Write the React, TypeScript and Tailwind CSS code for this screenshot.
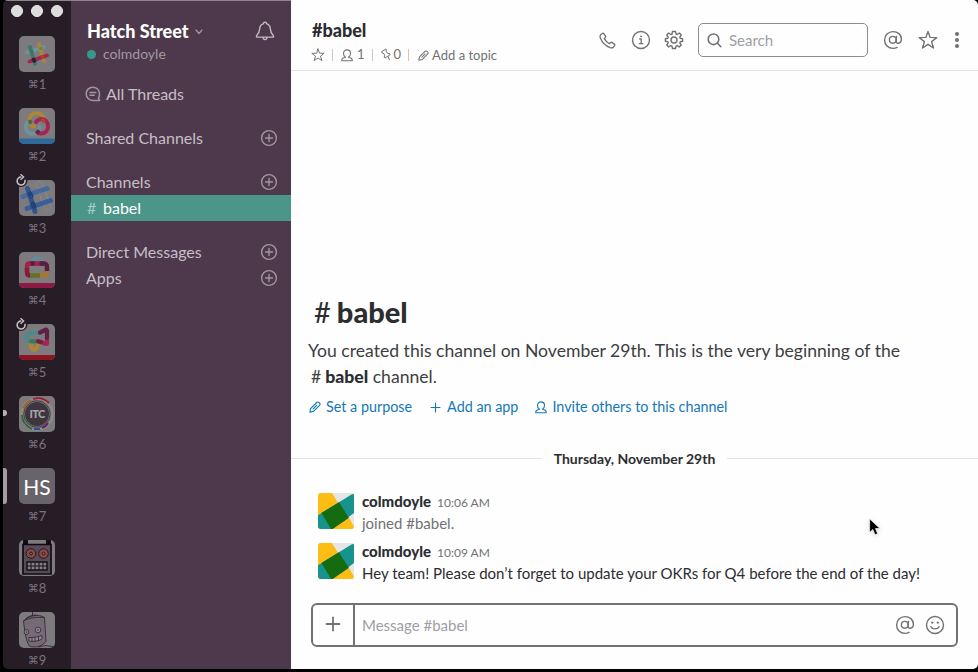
import React from "react";

type IconProps = { className?: string };

const stroke = {
  fill: "none",
  stroke: "currentColor",
  strokeLinecap: "round" as const,
  strokeLinejoin: "round" as const,
};

function Star({ className }: IconProps) {
  return (
    <svg viewBox="0 0 20 20" className={className} {...stroke} strokeWidth={1.4}>
      <path d="M10 1.4 12.2 7.4 18.8 7.6 13.6 11.6 15.5 18 10 14.3 4.5 18 6.4 11.6 1.2 7.6 7.8 7.4Z" />
    </svg>
  );
}

function Person({ className }: IconProps) {
  return (
    <svg viewBox="0 0 12 13" className={className} {...stroke} strokeWidth={1.1}>
      <path d="M4.5 8.3C3.200 7.300 2.500 6 2.500 4.400 2.500 2.300 3.900 .9 6 .9S9.500 2.300 9.500 4.400C9.500 6 8.800 7.300 7.500 8.300L10.200 9.200C11 9.600 11.300 10.400 11.300 11.700H.7C.7 10.400 1 9.600 1.800 9.200Z" />
    </svg>
  );
}

function Pin({ className }: IconProps) {
  return (
    <svg viewBox="0 0 10 13" className={className} {...stroke} strokeWidth={1}>
      <path d="M.8 3.600 4.900.9 5.500 1.900 5 3.200 6.700 5.500 8.900 5.700 9.200 6.700 4 10 3.200 9.300 3.700 7.200 2.300 5 1.100 4.800ZM7 8.500 8.500 11.900" />
    </svg>
  );
}

function Pencil({ className }: IconProps) {
  return (
    <svg viewBox="0 0 12 12" className={className} {...stroke} strokeWidth={1.1}>
      <path d="M.9 11.2 1.6 7.6 7.7 1.5C8.3.9 9.1.8 9.9 1.5L10.6 2.2C11.2 2.9 11.2 3.7 10.6 4.3L4.5 10.4ZM4.2 7.900 7.700 4.300" />
    </svg>
  );
}

function At({ className }: IconProps) {
  return (
    <svg viewBox="0 0 20 20" className={className} {...stroke} strokeWidth={1.4}>
      <circle cx="9.8" cy="9.8" r="3.4" />
      <path d="M13.5 6.400 13.100 11C13 12.600 14 13.400 15.300 13.200 17.300 12.900 18.400 11 18.400 9 18.200 4.500 14.700 1.600 10 1.600 5.200 1.600 1.600 5.100 1.600 10S5.200 18.400 10 18.400C11.700 18.400 13 18 14.100 17.400" />
    </svg>
  );
}

function Bell({ className }: IconProps) {
  return (
    <svg viewBox="0 0 20 20" className={className} {...stroke} strokeWidth={1.4}>
      <path d="M10 1.200C8.900 1.200 8.300 1.900 8.200 2.900 5.900 3.600 4.800 5.400 4.700 7.700 4.600 11.100 3.800 12.300 1.500 14.900V16.100H18.500V14.900C16.200 12.300 15.400 11.100 15.300 7.700 15.200 5.400 14.100 3.600 11.800 2.900 11.700 1.900 11.100 1.200 10 1.200ZM8 16.300C8.100 17.800 8.900 18.600 10 18.600S11.900 17.800 12 16.300" />
    </svg>
  );
}

function Threads({ className }: IconProps) {
  return (
    <svg viewBox="0 0 16 16" className={className} {...stroke} strokeWidth={1.5}>
      <path d="M13.500 12.200C14.200 11 14.500 9.700 14.500 8 14.300 4 11.600 1.200 7.800 1.200 4 1.200 1.200 4.100 1.200 7.800S4 14.400 7.800 14.400H14.600L13.500 12.200ZM5 6.500H10.800M5 9.300H9.200" />
    </svg>
  );
}

function Phone({ className }: IconProps) {
  return (
    <svg viewBox="0 0 18 18" className={className} {...stroke} strokeWidth={1.4}>
      <path d="M1.800 3 3.500 1.500C4.100 1.100 4.700 1.200 5.100 1.700L6.900 4.400C7.200 4.900 7.100 5.400 6.700 5.800L5.500 7C6.800 9.200 8.700 11.100 11 12.400L12.200 11.200C12.600 10.800 13.100 10.700 13.600 11L16.300 12.800C16.800 13.200 16.900 13.800 16.500 14.400L15.100 16.100C14.300 16.900 13 17 11.700 16.500 6.900 14.600 3.300 11.100 1.400 6.300 1 5 1 3.800 1.800 3Z" />
    </svg>
  );
}

function Info({ className }: IconProps) {
  return (
    <svg viewBox="0 0 20 20" className={className} {...stroke} strokeWidth={1.4}>
      <circle cx="10" cy="10" r="8.5" />
      <path d="M8.700 9H10.200V13.600M8.300 13.700H11.800" strokeWidth={1.3} />
      <circle cx="10" cy="6.4" r=".65" fill="currentColor" strokeWidth={0.6} />
    </svg>
  );
}

function Gear({ className }: IconProps) {
  return (
    <svg viewBox="0 0 20 20" className={className} {...stroke} strokeWidth={1.4}>
      <path d="M8.500 1.500H11.500L12.100 4 13.200 4.500 15.400 3 17.300 5 15.800 7.200 16.200 8.300 18.600 8.800V11.300L16.200 11.800 15.800 12.900 17.200 15 15.300 17 13.200 15.600 12 16.100 11.500 18.500H8.500L8 16.100 6.800 15.600 4.700 17 2.800 15 4.200 12.900 3.800 11.800 1.400 11.300V8.800L3.800 8.300 4.200 7.200 2.700 5 4.600 3 6.800 4.500 8 4Z" />
      <circle cx="10" cy="10" r="3" />
    </svg>
  );
}

function Magnifier({ className }: IconProps) {
  return (
    <svg viewBox="0 0 15 15" className={className} {...stroke} strokeWidth={1.6}>
      <circle cx="6.5" cy="6.3" r="5.3" />
      <path d="M10.400 10.300 13.800 13.700" />
    </svg>
  );
}

function Smile({ className }: IconProps) {
  return (
    <svg viewBox="0 0 20 20" className={className} {...stroke} strokeWidth={1.4}>
      <circle cx="10" cy="10" r="8.5" />
      <path d="M5.900 11.700C7.300 14.600 12.700 14.600 14.100 11.700" />
      <circle cx="7.2" cy="7.6" r=".9" fill="currentColor" strokeWidth={0.5} />
      <circle cx="12.8" cy="7.6" r=".9" fill="currentColor" strokeWidth={0.5} />
    </svg>
  );
}

function CirclePlus() {
  return (
    <svg viewBox="0 0 18 18" className="h-[18px] w-[18px] shrink-0 text-[#a297a0]" {...stroke} strokeWidth={1.4}>
      <circle cx="9" cy="9" r="7.4" />
      <path d="M9 5.500V12.500M5.500 9H12.500" />
    </svg>
  );
}

function Plus({ className, weight = 1.7 }: IconProps & { weight?: number }) {
  return (
    <svg viewBox="0 0 16 16" className={className} {...stroke} strokeWidth={weight}>
      <path d="M8 1.500V14.500M1.500 8H14.500" />
    </svg>
  );
}

const tile = "block h-9 w-9 rounded-[5px] bg-[#7e7b7e]";

function SlackTile() {
  return (
    <svg viewBox="0 0 36 36" className={tile} fill="none" strokeLinecap="round" strokeWidth={3.8}>
      <path d="M8 16.500 25 11" stroke="#6b929f" />
      <path d="M20 8 25 25" stroke="#aa8637" />
      <path d="M11 11 16 28" stroke="#3e7869" />
      <path d="M10.500 25.500 28 19.500" stroke="#a62353" />
      <path d="M14.500 23.500 15.500 25" stroke="#302034" />
      <path d="M23 20.500 24 21.500" stroke="#a74530" strokeWidth={3} />
      <path d="M12.300 15 13 15" stroke="#3b7562" strokeWidth={3} />
      <path d="M21.500 12.500 22.200 12.500" stroke="#718332" strokeWidth={3} />
    </svg>
  );
}

function RingsTile() {
  return (
    <svg viewBox="0 0 36 36" className={tile + " overflow-hidden"} fill="none" strokeWidth={4} strokeLinecap="round">
      <path d="M0 30.500H36V36H0Z" fill="#2e699b" />
      <path d="M21 19C20.500 23.500 17.500 26 14 26 10 26 7 23 7 19 7 16 9 13.500 11.500 12.600" stroke="#6b929f" />
      <path d="M15.500 18.500C12 18 10.500 15 10.500 12 10.500 8 13.500 5.200 18 5.200 22 5.200 24.500 8 25 11" stroke="#aa8637" />
      <path d="M17 14C18.500 12 20.500 11 22.500 11 26.500 11 29 14.500 29 18.500 29 22.500 26 25.500 22 25.500 20.500 25.500 19.500 25 18.500 24.300" stroke="#a62353" />
      <path d="M11 13.500 11.300 14.300" stroke="#486b3d" />
      <path d="M18.500 24.300 19.200 23.700" stroke="#612748" />
      <path d="M24 12.300 24.500 12.600" stroke="#a74530" />
    </svg>
  );
}

function BlueprintTile() {
  return (
    <svg viewBox="0 0 36 36" className={tile} fill="none" strokeLinecap="round" strokeWidth={5}>
      <g stroke="#96939a" strokeWidth={0.6} strokeDasharray="2 1">
        <circle cx="20.5" cy="4.5" r="3" />
        <path d="M18 7 26 29C28 32 33 28 31 25L24 5" />
      </g>
      <path d="M4 16.500 28 8.500" stroke="#456a9b" />
      <path d="M8 28.500 31.500 20.500" stroke="#365f9c" />
      <path d="M8.500 8.500 16 31.500" stroke="#31558e" />
      <path d="M11 14 12 16M14 24 15 27" stroke="#264177" />
      <path d="M6 18.500 28 11M10 30.500 31.500 23" stroke="#5c83b0" strokeWidth={0.4} strokeDasharray="1 2" />
    </svg>
  );
}

function BagTile() {
  return (
    <svg viewBox="0 0 36 36" className={tile} fill="none" strokeWidth={4.4}>
      <path d="M0 31H36V32C36 34.500 34.500 36 32 36H4C1.500 36 0 34.500 0 32Z" fill="#8e1943" />
      <path d="M13.500 11.500V10.500C13.500 4.800 22.500 4.800 22.500 10.500V11.500" stroke="#648a99" />
      <path d="M11 11.500H25" stroke="#a62048" />
      <path d="M12 11.500H10C8 11.500 8 12.500 8 14V20C8 22.500 9 23.500 11 23.500" stroke="#a62048" />
      <path d="M8 16V20C8 22.500 9 23.500 11 23.500" stroke="#841e38" />
      <path d="M24 11.500C27.500 11.500 28 12.500 28 15V20" stroke="#581d43" />
      <path d="M28 19C28 23 27 23.500 24 23.500H21" stroke="#a6782e" />
      <path d="M11 23.500H21" stroke="#667024" />
      <path d="M11.500 11.500H15.500M20.500 11.500H24.500" stroke="#571e42" />
    </svg>
  );
}

function MegaphoneTile() {
  return (
    <svg viewBox="0 0 36 36" className={tile} fill="none" strokeWidth={4.2} strokeLinecap="round">
      <path d="M0 31H36V32C36 34.500 34.500 36 32 36H4C1.500 36 0 34.500 0 32Z" fill="#8d1522" strokeWidth={0} />
      <path d="M12 18V22C13 27 18 26.500 18.500 22V19" stroke="#aa8637" />
      <path d="M11 17.300C6 16.500 6 9 12 9H19" stroke="#4b8b8b" />
      <path d="M12 17.300H18" stroke="#3b785d" />
      <path d="M28 14V19.500C28 20 27.500 20 26.500 19.700L20 17.500" stroke="#a62353" />
      <path d="M21 8.500 26.500 5.800C27.500 5.500 28 6 28 7V14" stroke="#612047" />
      <path d="M19 17.300 22 18" stroke="#722041" />
    </svg>
  );
}

function ItcTile() {
  return (
    <svg viewBox="0 0 36 36" className={tile} fill="none">
      <circle cx="18" cy="18" r="15.5" stroke="#8f8b8f" strokeWidth={2} />
      <circle cx="18" cy="18" r="13.2" stroke="#464047" strokeWidth={1} />
      <circle cx="18" cy="18" r="12" fill="#3d363e" />
      <g strokeWidth={1.8}>
        <path d="M14 3C20 1 26 3 30 7" stroke="#a11a2c" />
        <path d="M4 12 6 9C8 6 10 5 12 4" stroke="#a66420" />
        <path d="M3 17V14" stroke="#a98c23" />
        <path d="M3 19C3 25 7 30 13 33" stroke="#246a38" />
        <path d="M15 33H21" stroke="#284f9b" />
        <path d="M23 32C26 31 28 29 29 27" stroke="#642267" />
      </g>
      <text x="18" y="21.9" textAnchor="middle" fill="#a7a3a8" fontFamily="Lato, sans-serif" fontSize="11" fontWeight="900" letterSpacing="-0.7">ITC</text>
    </svg>
  );
}

function RobotTile() {
  return (
    <svg viewBox="0 0 36 36" className={tile}>
      <path d="M5 4V1H8V4M28 4V1H31V4" stroke="#151016" strokeWidth={2} />
      <path d="M4 4.500H32V34H4Z" fill="#574a5a" stroke="#100b11" strokeWidth={1.7} />
      <g fill="#8d4943" stroke="#221719" strokeWidth={1}>
        <circle cx="12" cy="13.5" r="4.8" />
        <circle cx="24.5" cy="13.5" r="4.8" />
      </g>
      <g fill="#787078" stroke="#29171a" strokeWidth={1}>
        <circle cx="12" cy="13.5" r="1.4" />
        <circle cx="24.5" cy="13.5" r="1.4" />
      </g>
      <path d="M8 22H28V30H8Z" fill="#858085" stroke="#151016" strokeWidth={1.5} />
      <path d="M12 22V30M16 22V30M20 22V30M24 22V30M8 26H28" stroke="#151016" strokeWidth={1} />
    </svg>
  );
}

function SketchTile() {
  return (
    <svg viewBox="0 0 36 36" className={tile} fill="#766a76" stroke="#2c232d" strokeWidth={0.8}>
      <path d="M13.500 0V4" />
      <path d="M4.500 9C8 4 20 1.500 25.500 5.500L27 29C24 34 16 36.500 10.500 34 8 31 7 25 6 21Z" />
      <path d="M4.500 9C10 5.500 19 5 25.500 5.500M7 6.500C11 3.500 15 2.500 19 3.500" fill="none" />
      <circle cx="7.5" cy="20" r="2.4" fill="#908a90" />
      <circle cx="19" cy="18" r="2.8" fill="#908a90" />
      <circle cx="7.5" cy="20" r=".4" />
      <circle cx="19" cy="18" r=".4" />
      <path d="M10 25.500C14 26 20 24.500 23 23.500V27C20 29 14 30 10 29ZM13 25.700V29.500M16 25.200V29.500M19.500 24.500V28.800" fill="#8e898e" />
      <path d="M19 35 27 33.500 36 35" fill="none" />
    </svg>
  );
}

function LetterTile() {
  return (
    <div className="flex h-9 w-9 items-center justify-center rounded-[5px] bg-[#69646a] text-[21px] leading-none text-white">
      <span>HS</span>
    </div>
  );
}

function Refresh() {
  return (
    <svg viewBox="0 0 14 14" className="absolute -left-[5px] -top-[7px] h-[14px] w-[14px]">
      <circle cx="7" cy="7.5" r="6.5" fill="#261d27" />
      <path d="M10.900 6.800A4 4 0 1 1 7.300 4" fill="none" stroke="#c8c4c8" strokeWidth={1.5} />
      <path d="M6.500 1.200 9.600 4 6.500 6.800" fill="none" stroke="#c8c4c8" strokeWidth={1.4} />
    </svg>
  );
}

const workspaces = [
  { tile: <SlackTile /> },
  { tile: <RingsTile /> },
  { tile: <BlueprintTile />, refresh: true },
  { tile: <BagTile /> },
  { tile: <MegaphoneTile />, refresh: true },
  { tile: <ItcTile />, marker: "dot" },
  { tile: <LetterTile />, marker: "bar" },
  { tile: <RobotTile /> },
  { tile: <SketchTile /> },
];

function Rail() {
  return (
    <aside className="h-full w-[68px] shrink-0 overflow-hidden bg-[#261d27]">
      <div className="flex h-9 gap-2 pl-2 pt-[5px]">
        {[0, 1, 2].map((n) => (
          <span key={n} className="h-3 w-3 rounded-full border border-[#ececec] bg-[#dcdcdc]" />
        ))}
      </div>
      {workspaces.map((w, i) => (
        <div key={i} className="relative h-[72px] pl-4">
          {w.marker === "dot" && <span className="absolute -left-[2px] top-[14px] h-[6px] w-[6px] rounded-full bg-[#b7adb6]" />}
          {w.marker === "bar" && <span className="absolute left-0 top-0 h-9 w-1 rounded-r-[3px] bg-[#a69ba5]" />}
          <div className="relative w-9">
            {w.tile}
            {w.refresh && <Refresh />}
          </div>
          <div className="flex h-6 w-9 items-center justify-center font-['Lato','DejaVu_Sans',sans-serif] text-[13px] leading-[14px] text-[#7b747c]">
            <span className="text-[11px]">⌘</span>{i + 1}
          </div>
        </div>
      ))}
    </aside>
  );
}

function SectionRow({ label, className = "" }: { label: string; className?: string }) {
  return (
    <div className={"flex h-[26px] items-center justify-between pl-[15px] pr-[13px] text-[#c6bfc5] " + className}>
      <span>{label}</span>
      <CirclePlus />
    </div>
  );
}

function Sidebar() {
  return (
    <nav className="h-full w-[220px] shrink-0 bg-[#4d394b] text-[16px] leading-[26px]">
      <div className="flex h-[81px] justify-between pl-4 pr-4 pt-[18px]">
        <div>
          <div className="flex h-[26px] items-center text-[18px] font-black text-white">
            Hatch Street
            <svg viewBox="0 0 8 6" className="ml-[6px] mt-[2px] h-[6px] w-2 text-[#a297a0]" {...stroke} strokeWidth={1.2}>
              <path d="M1 1 4 4.500 7 1" />
            </svg>
          </div>
          <div className="flex h-5 items-center gap-[7px] text-[14px] text-[#a297a0]">
            <span className="h-[9px] w-[9px] rounded-full bg-[#38978d]" />
            colmdoyle
          </div>
        </div>
        <Bell className="mt-[3px] h-5 w-5 text-[#c1bac0]" />
      </div>
      <div className="flex h-[26px] items-center pl-[14px] text-[#c6bfc5]">
        <Threads className="mr-[5px] h-4 w-4 text-[#a297a0]" />
        All Threads
      </div>
      <SectionRow label="Shared Channels" className="mt-[18px]" />
      <SectionRow label="Channels" className="mt-[18px]" />
      <div className="flex h-[26px] items-center bg-[#4c9689] pl-4 text-white">
        <span className="w-4 text-[#a6cbc4]">#</span>babel
      </div>
      <SectionRow label="Direct Messages" className="mt-[18px]" />
      <SectionRow label="Apps" />
    </nav>
  );
}

function Divider() {
  return <span className="h-3 w-px bg-[#c9c9ca]" />;
}

function Header() {
  return (
    <header className="flex h-[71px] shrink-0 border-b border-[#e4e4e4] text-[#717274]">
      <div className="w-[308px] pl-[21px] pt-[17px]">
        <h1 className="text-[18px] font-black leading-[26px] text-[#2c2d30]">#babel</h1>
        <div className="mt-[1px] flex h-[22px] items-center text-[13px]">
          <Star className="-ml-px h-[14px] w-[14px]" />
          <span className="w-[7px]" />
          <Divider />
          <Person className="ml-2 mr-1 h-[13px] w-3" />
          1
          <span className="w-[7px]" />
          <Divider />
          <Pin className="-mt-px ml-2 mr-[3px] h-[13px] w-[10px]" />
          0
          <span className="w-[7px]" />
          <Divider />
          <Pencil className="ml-[9px] mr-[3px] h-[11px] w-[11px]" />
          <span className="pt-px">Add a topic</span>
        </div>
      </div>
      <div className="flex h-20 items-center">
        <Phone className="h-[17px] w-[17px]" />
        <Info className="ml-[15px] h-5 w-5" />
        <Gear className="ml-[13px] h-5 w-5" />
        <div className="ml-[14px] flex h-[34px] w-[170px] items-center rounded-[5px] border border-[#8b8c8e] pl-2 text-[15px] text-[#9e9ea6]">
          <Magnifier className="mr-[7px] h-[15px] w-[15px] text-[#717274]" />
          Search
        </div>
        <At className="ml-[15px] h-5 w-5" />
        <Star className="ml-[15px] h-5 w-5" />
        <span className="ml-[17px] flex w-1 flex-col gap-[2px]">
          <i className="h-1 w-1 rounded-full bg-[#717274]" />
          <i className="h-1 w-1 rounded-full bg-[#717274]" />
          <i className="h-1 w-1 rounded-full bg-[#717274]" />
        </span>
      </div>
    </header>
  );
}

function Avatar() {
  return (
    <svg viewBox="0 0 36 36" className="h-9 w-9 shrink-0 rounded-[3px] bg-[#e6e6e7]">
      <path d="M0 0H14L36 36H0Z" fill="#fdbd14" />
      <path d="M0 22 36 0V20L14 36H0Z" fill="#15938c" />
      <path d="M3.500 20 21 9.300 31 25 15 36H13Z" fill="#156c10" />
      <path d="M0 22V14L3.500 20Z" fill="#fdbd14" />
      <path d="M31 25 15 36H36V33.500Z" fill="#fdbd14" />
    </svg>
  );
}

function Message({ time, children, muted }: { time: string; children: React.ReactNode; muted?: boolean }) {
  return (
    <article className="flex h-[50px] gap-2 pl-[27px] text-[15px] leading-[22px]">
      <Avatar />
      <div className="-mt-[3px]">
        <div className="h-[22px]">
          <b className="font-black text-[#2c2d30]">colmdoyle</b>
          <span className="ml-[6px] text-[12px] text-[#717274]">{time}</span>
        </div>
        <p className={muted ? "text-[#717274]" : "text-[#2c2d30]"}>{children}</p>
      </div>
    </article>
  );
}

function Main() {
  return (
    <main className="relative flex h-full min-w-0 flex-1 flex-col bg-[#fefefe]">
      <Header />
      <section className="mt-[225px] h-[139px] shrink-0 pl-[17px] text-[#3d3e41]">
        <h2 className="flex h-8 items-center pl-[6px] text-[29px] font-black text-[#2c2d30]">
          <span className="mr-[6px] font-normal">#</span>babel
        </h2>
        <p className="pt-[10px] text-[17.6px] leading-[26px]">
          You created this channel on November 29th. This is the very beginning of the
          <br />
          <span className="ml-[3px] mr-1">#</span>
          <b className="font-black text-[#2c2d30]">babel</b> channel.
        </p>
        <div className="mt-[5px] flex h-6 items-center text-[14.35px] text-[#1279b5]">
          <Pencil className="ml-px mr-[5px] h-3 w-3" />
          Set a purpose
          <Plus className="ml-[18px] mr-[6px] h-[11px] w-[11px]" />
          Add an app
          <Person className="ml-[17px] mr-[5px] h-[13px] w-3" />
          Invite others to this channel
        </div>
      </section>
      <div className="mt-[13px] flex h-5 items-center gap-3 text-[14px] font-bold text-[#2c2d30]">
        <span className="h-px flex-1 bg-[#e4e4e4]" />
        Thursday, November 29th
        <span className="h-px flex-1 bg-[#e4e4e4]" />
      </div>
      <div className="mt-[25px] h-[110px]">
        <Message time="10:06 AM" muted>joined #babel.</Message>
        <Message time="10:09 AM">Hey team! Please don’t forget to update your OKRs for Q4 before the end of the day!</Message>
      </div>
      <div className="ml-5 flex h-11 w-[647px] items-center rounded-[6px] border-2 border-[#717274] text-[#717274]">
        <div className="flex h-full w-[42px] items-center justify-center border-r-2 border-[#717274] pb-[2px]">
          <Plus className="h-4 w-4" weight={1.8} />
        </div>
        <span className="flex-1 pl-[7px] text-[15px] text-[#9e9ea6]">Message #babel</span>
        <At className="-mt-px mr-[10px] h-5 w-5" />
        <Smile className="-mt-px mr-[11px] h-5 w-5" />
      </div>
      <svg viewBox="0 0 12 18" className="absolute left-[578px] top-[518px] h-[18px] w-3 drop-shadow-sm">
        <path d="M.6.8V14.500L3.800 11.500 6 16.800 8.700 15.700 6.500 10.600H11Z" fill="#000" stroke="#fff" strokeWidth={0.7} />
      </svg>
    </main>
  );
}

export default function App() {
  return (
    <div className="h-[672px] w-[978px] overflow-hidden bg-black pl-[3px] font-['Lato',sans-serif]">
      <div className="relative flex h-[669px] overflow-hidden rounded-[5px]">
        <Rail />
        <Sidebar />
        <Main />
        <span className="absolute left-0 top-0 h-px w-[288px] bg-[#8f838d]" />
      </div>
    </div>
  );
}
